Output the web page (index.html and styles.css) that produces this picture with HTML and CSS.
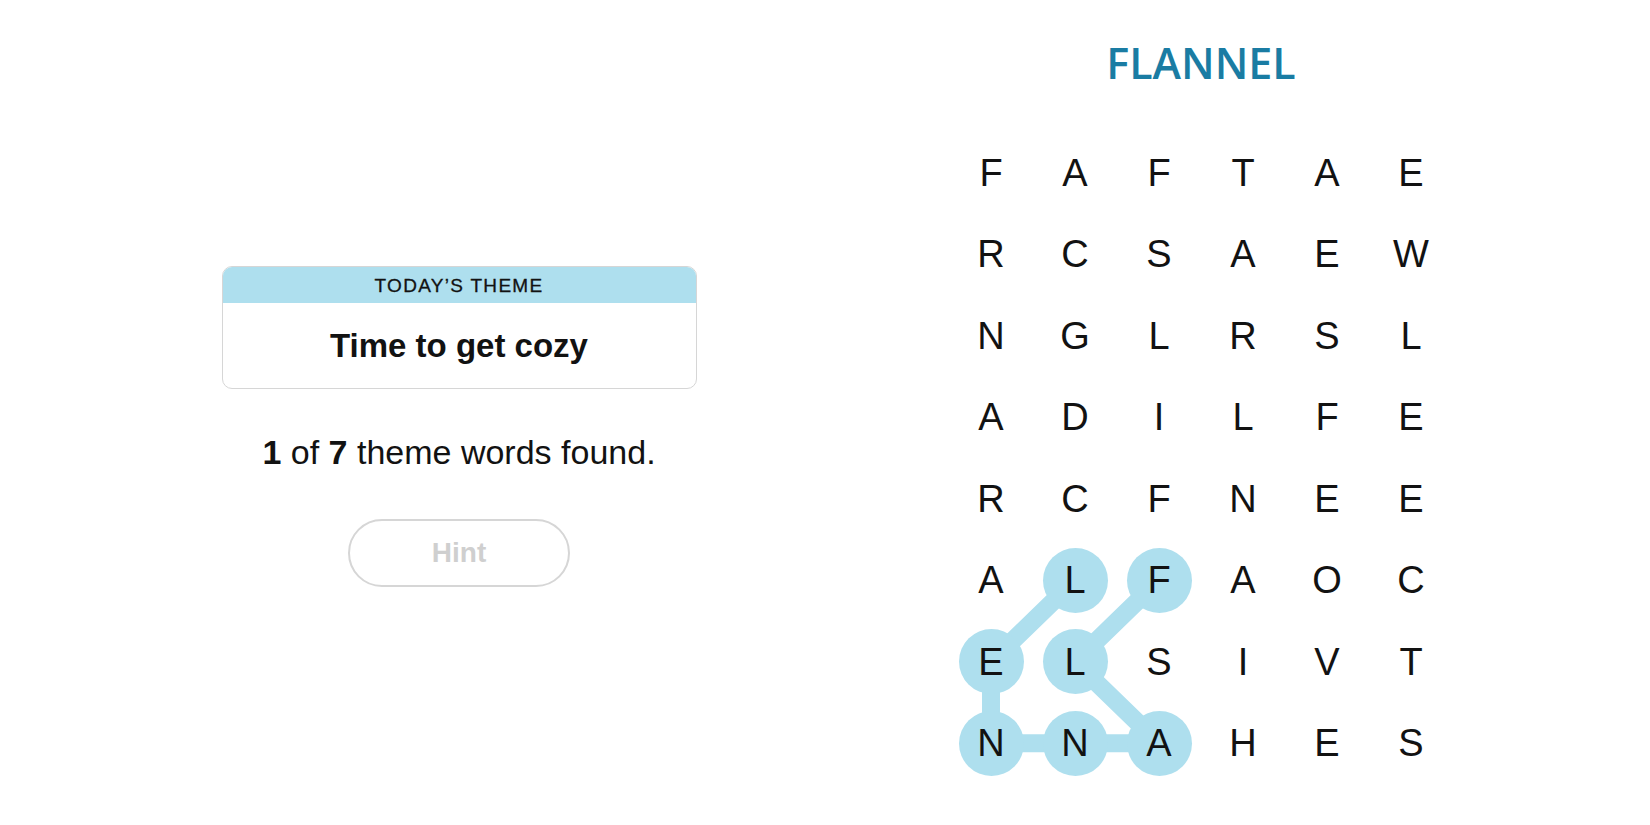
FILE: index.html
```html
<!DOCTYPE html>
<html lang="en">
<head>
<meta charset="utf-8">
<title>Strands</title>
<link rel="stylesheet" href="styles.css">
</head>
<body>
<div class="page">
  <section class="left">
    <div class="theme-card">
      <div class="theme-head">TODAY’S THEME</div>
      <div class="theme-body">Time to get cozy</div>
    </div>
    <p class="found"><b>1</b> of <b>7</b> theme words found.</p>
    <button class="hint" type="button">Hint</button>
  </section>
  <section class="right">
    <h1 class="title">FLANNEL</h1>
    <div class="board">
      <svg class="links" width="504" height="652" viewBox="0 0 504 652" aria-hidden="true">
        <polyline points="210,448.25 126,529.75 210,611.25 126,611.25 42,611.25 42,529.75 126,448.25" />
      </svg>
      <span class="cell">F</span><span class="cell">A</span><span class="cell">F</span><span class="cell">T</span><span class="cell">A</span><span class="cell">E</span>
      <span class="cell">R</span><span class="cell">C</span><span class="cell">S</span><span class="cell">A</span><span class="cell">E</span><span class="cell">W</span>
      <span class="cell">N</span><span class="cell">G</span><span class="cell">L</span><span class="cell">R</span><span class="cell">S</span><span class="cell">L</span>
      <span class="cell">A</span><span class="cell">D</span><span class="cell">I</span><span class="cell">L</span><span class="cell">F</span><span class="cell">E</span>
      <span class="cell">R</span><span class="cell">C</span><span class="cell">F</span><span class="cell">N</span><span class="cell">E</span><span class="cell">E</span>
      <span class="cell">A</span><span class="cell on">L</span><span class="cell on">F</span><span class="cell">A</span><span class="cell">O</span><span class="cell">C</span>
      <span class="cell on">E</span><span class="cell on">L</span><span class="cell">S</span><span class="cell">I</span><span class="cell">V</span><span class="cell">T</span>
      <span class="cell on">N</span><span class="cell on">N</span><span class="cell on">A</span><span class="cell">H</span><span class="cell">E</span><span class="cell">S</span>
    </div>
  </section>
</div>
</body>
</html>
```
FILE: styles.css
```css
html, body {
  margin: 0;
  padding: 0;
  background: #ffffff;
}

body {
  font-family: "Liberation Sans", Arial, sans-serif;
  color: #121212;
}

.page {
  display: flex;
  align-items: flex-start;
  height: 825px;
  overflow: hidden;
}

.left {
  width: 600px;
  margin-left: 159px;
  padding-top: 266px;
  display: flex;
  flex-direction: column;
  align-items: center;
}

.theme-card {
  box-sizing: border-box;
  width: 475px;
  border: 1px solid #d6d6d6;
  border-radius: 10px;
  overflow: hidden;
  background: #ffffff;
}

.theme-head {
  height: 36px;
  line-height: 38px;
  background: #aedfee;
  text-align: center;
  font-size: 19px;
  letter-spacing: 1.3px;
  color: #121212;
  -webkit-text-stroke: 0.3px #121212;
}

.theme-body {
  height: 85px;
  line-height: 85px;
  text-align: center;
  font-size: 33px;
  font-weight: bold;
  color: #121212;
}

.found {
  margin: 43px 0 0;
  font-size: 34px;
  line-height: 40px;
  color: #121212;
}

.found b {
  font-weight: bold;
}

.hint {
  box-sizing: border-box;
  margin-top: 47px;
  width: 222px;
  height: 68px;
  border: 2px solid #d6d6d6;
  border-radius: 34px;
  background: #ffffff;
  font-family: "Liberation Sans", Arial, sans-serif;
  font-size: 28px;
  font-weight: bold;
  color: #cfcfcf;
  padding: 0;
}

.right {
  width: 504px;
  margin-left: 190px;
}

.title {
  margin: 0;
  padding-top: 41px;
  font-family: "Open Sans", "Noto Sans", sans-serif;
  font-weight: 600;
  font-size: 43px;
  line-height: 43px;
  text-align: center;
  color: #1a7ca3;
}

.board {
  position: relative;
  margin-top: 48px;
  display: grid;
  grid-template-columns: repeat(6, 84px);
  grid-auto-rows: 81.5px;
}

.links {
  position: absolute;
  left: 0;
  top: 0;
  z-index: 0;
}

.links polyline {
  fill: none;
  stroke: #aedfee;
  stroke-width: 18;
  stroke-linecap: round;
  stroke-linejoin: round;
}

.cell {
  position: relative;
  z-index: 1;
  display: flex;
  align-items: center;
  justify-content: center;
  font-size: 38px;
  line-height: 1;
  color: #121212;
}

.cell.on::before {
  content: "";
  position: absolute;
  left: 50%;
  top: 50%;
  width: 65px;
  height: 65px;
  margin: -32.5px 0 0 -32.5px;
  border-radius: 50%;
  background: #aedfee;
  z-index: -1;
}
```
